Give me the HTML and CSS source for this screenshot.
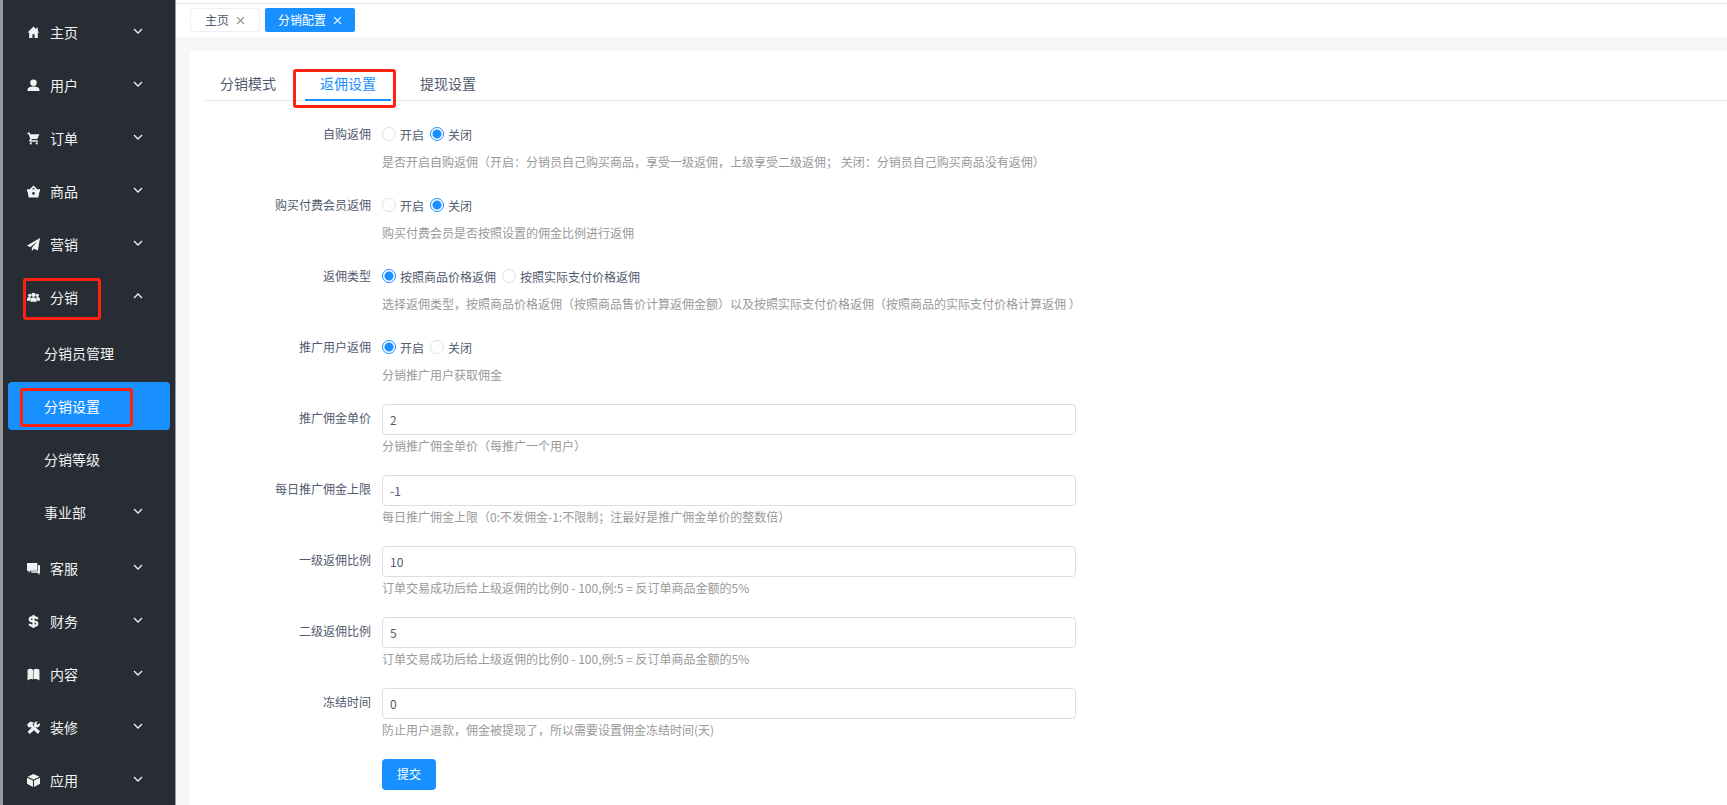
FILE: index.html
```html
<!DOCTYPE html>
<html lang="zh-CN">
<head>
  <meta charset="UTF-8">
  <meta name="viewport" content="width=device-width, initial-scale=1.0">
  <title>分销配置</title>
  <link rel="stylesheet" href="styles.css">
</head>
<body>
  <svg class="sprite" aria-hidden="true">
    <symbol id="down" viewBox="0 0 10 10"><path d="M1 3l4 4 4-4" fill="none" stroke="currentColor" stroke-width="1.3"/></symbol>
    <symbol id="up" viewBox="0 0 10 10"><path d="M1 7l4-4 4 4" fill="none" stroke="currentColor" stroke-width="1.3"/></symbol>
    <symbol id="close" viewBox="0 0 8 8"><path d="M1 1l6 6M7 1l-6 6" fill="none" stroke="currentColor"/></symbol>
  </svg>

  <aside class="sidebar">
    <ul class="menu">
      <li><a href="#" class="menu-item">
        <svg class="icon" viewBox="0 0 24 24"><path d="M12 1L1 12h3v10h6v-7h4v7h6V12h3L20 9V3h-3v3z"/></svg>
        <span>主页</span><svg class="arrow"><use href="#down"/></svg></a></li>
      <li><a href="#" class="menu-item">
        <svg class="icon" viewBox="0 0 24 24"><circle cx="12" cy="7" r="6"/><path d="M1 22v-2c0-4 5-6 11-6s11 2 11 6v2z"/></svg>
        <span>用户</span><svg class="arrow"><use href="#down"/></svg></a></li>
      <li><a href="#" class="menu-item">
        <svg class="icon" viewBox="0 0 24 24"><path d="M1 1h4l1 3h17l-4 9H9l-1 2h12v3H5l-1-2 2-4L3 4H1z"/><circle cx="7" cy="21" r="2"/><circle cx="18" cy="21" r="2"/></svg>
        <span>订单</span><svg class="arrow"><use href="#down"/></svg></a></li>
      <li><a href="#" class="menu-item">
        <svg class="icon" viewBox="0 0 24 24"><path fill-rule="evenodd" d="M0 8h5l7-7 7 7h5v4h-1l-2 11H3L1 12H0zM9 8h6l-3-3zM12 13a2 2 0 1 0 0 5 2 2 0 0 0 0-5z"/></svg>
        <span>商品</span><svg class="arrow"><use href="#down"/></svg></a></li>
      <li><a href="#" class="menu-item">
        <svg class="icon" viewBox="0 0 24 24"><path d="M24 0L0 14l6 3L19 6 9 18v6l4-4 7 3z"/></svg>
        <span>营销</span><svg class="arrow"><use href="#down"/></svg></a></li>
      <li><a href="#" class="menu-item">
        <svg class="icon" viewBox="0 0 24 24"><circle cx="5" cy="8" r="3"/><circle cx="19" cy="8" r="3"/><circle cx="12" cy="7" r="4"/><path d="M0 18v-3c0-3 3-4 5-4l2 1-2 6zM24 18v-3c0-3-3-4-5-4l-2 1 2 6zM6 20v-4c0-3 3-4 6-4s6 1 6 4v4z"/></svg>
        <span>分销</span><svg class="arrow"><use href="#up"/></svg>
        <i class="mark mark-menu"></i></a>
        <ul class="submenu">
          <li><a href="#" class="menu-item">分销员管理</a></li>
          <li><a href="#" class="menu-item active">分销设置<i class="mark mark-submenu"></i></a></li>
          <li><a href="#" class="menu-item">分销等级</a></li>
          <li><a href="#" class="menu-item"><span>事业部</span><svg class="arrow"><use href="#down"/></svg></a></li>
        </ul>
      </li>
      <li><a href="#" class="menu-item">
        <svg class="icon" viewBox="0 0 24 24"><path d="M0 2h19v14H7l-4 4v-4H0z"/><path d="M20 6h4v14h-1v4l-4-4H8v-3h12z"/></svg>
        <span>客服</span><svg class="arrow"><use href="#down"/></svg></a></li>
      <li><a href="#" class="menu-item">
        <svg class="icon" viewBox="0 0 24 24"><path d="M19 8c0-3-3-4-7-4s-7 1-7 4 3 4 7 4 7 1 7 4-3 4-7 4-7-1-7-4M12 0v24" fill="none" stroke="currentColor" stroke-width="4"/></svg>
        <span>财务</span><svg class="arrow"><use href="#down"/></svg></a></li>
      <li><a href="#" class="menu-item">
        <svg class="icon" viewBox="0 0 24 24"><path d="M1 3c3-2 7-2 10 0v18c-3-1-5-1-10 2zM12 3c3-2 8-2 11 0v20c-5-3-8-3-11-2z"/></svg>
        <span>内容</span><svg class="arrow"><use href="#down"/></svg></a></li>
      <li><a href="#" class="menu-item">
        <svg class="icon" viewBox="0 0 24 24"><path d="M0 7l6-6 7 2-3 4 14 12-4 5L7 11l-4 1z"/><path d="M1 20l9-9 5 4-10 9zM13 9c-1-5 2-9 7-8l-3 4 2 2 5-3c1 5-3 9-8 8z"/></svg>
        <span>装修</span><svg class="arrow"><use href="#down"/></svg></a></li>
      <li><a href="#" class="menu-item">
        <svg class="icon" viewBox="0 0 24 24"><path d="M12 0l11 5-11 5L1 5zM0 7l11 5v12L0 18zM24 7l-11 5v12l11-6z"/></svg>
        <span>应用</span><svg class="arrow"><use href="#down"/></svg></a></li>
    </ul>
  </aside>

  <main class="main">
    <div class="tags">
      <a href="#" class="tag">主页<svg class="close"><use href="#close"/></svg></a>
      <a href="#" class="tag tag-active">分销配置<svg class="close"><use href="#close"/></svg></a>
    </div>

    <div class="card">
      <nav class="tabs">
        <a href="#" class="tab">分销模式</a>
        <a href="#" class="tab tab-active">返佣设置<i class="mark mark-tab"></i></a>
        <a href="#" class="tab">提现设置</a>
      </nav>

      <form class="form">
        <div class="row" role="radiogroup" aria-labelledby="self-label">
          <span class="label" id="self-label">自购返佣</span>
          <div>
            <div class="radios">
              <label><input type="radio" name="self">开启</label>
              <label><input type="radio" name="self" checked>关闭</label>
            </div>
            <p class="hint">是否开启自购返佣（开启：分销员自己购买商品，享受一级返佣，上级享受二级返佣； 关闭：分销员自己购买商品没有返佣）</p>
          </div>
        </div>
        <div class="row" role="radiogroup" aria-labelledby="member-label">
          <span class="label" id="member-label">购买付费会员返佣</span>
          <div>
            <div class="radios">
              <label><input type="radio" name="member">开启</label>
              <label><input type="radio" name="member" checked>关闭</label>
            </div>
            <p class="hint">购买付费会员是否按照设置的佣金比例进行返佣</p>
          </div>
        </div>
        <div class="row" role="radiogroup" aria-labelledby="type-label">
          <span class="label" id="type-label">返佣类型</span>
          <div>
            <div class="radios">
              <label><input type="radio" name="type" checked>按照商品价格返佣</label>
              <label><input type="radio" name="type">按照实际支付价格返佣</label>
            </div>
            <p class="hint">选择返佣类型，按照商品价格返佣（按照商品售价计算返佣金额）以及按照实际支付价格返佣（按照商品的实际支付价格计算返佣 ）</p>
          </div>
        </div>
        <div class="row" role="radiogroup" aria-labelledby="promo-label">
          <span class="label" id="promo-label">推广用户返佣</span>
          <div>
            <div class="radios">
              <label><input type="radio" name="promo" checked>开启</label>
              <label><input type="radio" name="promo">关闭</label>
            </div>
            <p class="hint">分销推广用户获取佣金</p>
          </div>
        </div>
        <div class="row">
          <label class="label" for="price">推广佣金单价</label>
          <div>
            <input type="text" class="input" id="price" value="2">
            <p class="hint">分销推广佣金单价（每推广一个用户）</p>
          </div>
        </div>
        <div class="row">
          <label class="label" for="limit">每日推广佣金上限</label>
          <div>
            <input type="text" class="input" id="limit" value="-1">
            <p class="hint">每日推广佣金上限（0:不发佣金-1:不限制；注最好是推广佣金单价的整数倍）</p>
          </div>
        </div>
        <div class="row">
          <label class="label" for="level1">一级返佣比例</label>
          <div>
            <input type="text" class="input" id="level1" value="10">
            <p class="hint">订单交易成功后给上级返佣的比例0 - 100,例:5 = 反订单商品金额的5%</p>
          </div>
        </div>
        <div class="row">
          <label class="label" for="level2">二级返佣比例</label>
          <div>
            <input type="text" class="input" id="level2" value="5">
            <p class="hint">订单交易成功后给上级返佣的比例0 - 100,例:5 = 反订单商品金额的5%</p>
          </div>
        </div>
        <div class="row">
          <label class="label" for="freeze">冻结时间</label>
          <div>
            <input type="text" class="input" id="freeze" value="0">
            <p class="hint">防止用户退款，佣金被提现了，所以需要设置佣金冻结时间(天)</p>
          </div>
        </div>
        <div class="row">
          <span></span>
          <div><button type="submit" class="submit">提交</button></div>
        </div>
      </form>
    </div>
  </main>
</body>
</html>
```
FILE: styles.css
```css
* {
  box-sizing: border-box;
}
body {
  display: flex;
  height: 100vh;
  margin: 0;
  overflow: hidden;
  border-left: 3px solid #999;
  background: #f7f7f7;
  color: #515a6e;
  font-family: "Noto Sans CJK SC", sans-serif;
  font-size: 12px;
}
a {
  color: inherit;
  text-decoration: none;
}
ul {
  margin: 0;
  padding: 0;
  list-style: none;
}
.sprite {
  display: none;
}

/* sidebar */
.sidebar {
  flex: none;
  width: 173px;
  padding: 8px 5px 0;
  overflow-y: auto;
  scrollbar-width: none;
  background: #282c34;
  border-right: 1px solid #999b9f;
  color: #f2f2f3;
  font-size: 14px;
}
.menu-item {
  position: relative;
  display: flex;
  align-items: center;
  height: 48px;
  margin-bottom: 5px;
  padding: 0 27px 0 19px;
  border-radius: 4px;
}
.icon {
  width: 13px;
  height: 13px;
  margin-right: 10px;
  fill: currentColor;
}
.arrow {
  width: 10px;
  height: 10px;
  margin-left: auto;
  margin-bottom: 3px;
}
.submenu {
  padding: 3px 0;
}
.submenu .menu-item {
  padding-left: 36px;
}
.menu-item.active {
  background: #1890ff;
  color: #fff;
}

/* red highlight frames */
.mark {
  position: absolute;
  border: 3px solid #ff2010;
  border-radius: 3px;
  pointer-events: none;
}
.mark-menu {
  top: 5px;
  left: 15px;
  width: 78px;
  height: 42px;
}
.mark-submenu {
  top: 6px;
  left: 12px;
  width: 113px;
  height: 39px;
}
.mark-tab {
  top: 2px;
  left: -12px;
  width: 103px;
  height: 39px;
}

/* page */
.main {
  display: flex;
  flex: 1;
  flex-direction: column;
  min-width: 0;
  border-top: 3px solid #fff;
}
.tags {
  display: flex;
  gap: 5px;
  padding: 4px 14px 5px;
  background: #fff;
  border-top: 1px solid #e8e8ea;
}
.tag {
  display: flex;
  align-items: center;
  gap: 7px;
  height: 24px;
  padding: 0 14px;
  border: 1px solid #eeeef8;
  border-radius: 2px;
  line-height: 20px;
}
.tag-active {
  padding: 0 12px;
  background: #1890ff;
  border-color: #1890ff;
  color: #fff;
}
.close {
  width: 9px;
  height: 9px;
  color: #888;
}
.tag-active .close {
  color: #fff;
}
.card {
  flex: 1;
  margin: 14px 0 0 14px;
  padding: 16px 0 0 15px;
  border-top-left-radius: 4px;
  background: #fff;
}
.tabs {
  display: flex;
  gap: 14px;
  border-bottom: 1px solid #dfe2e8;
  font-size: 14px;
}
.tab {
  position: relative;
  height: 34px;
  margin-bottom: -1px;
  padding: 0 15px;
  border-bottom: 2px solid transparent;
  line-height: 32px;
}
.tab-active {
  border-bottom-color: #1890ff;
  color: #1890ff;
}

/* form */
.form {
  padding-top: 19px;
}
.row {
  display: grid;
  grid-template-columns: 166px minmax(0, 694px);
  column-gap: 11px;
  margin-bottom: 19px;
}
.label {
  line-height: 27px;
  text-align: right;
}
.radios {
  display: flex;
  gap: 6px;
  height: 29px;
  margin-bottom: 2px;
}
.radios label {
  display: flex;
  align-items: center;
  gap: 4px;
  height: 28px;
}
.radios input {
  appearance: none;
  width: 14px;
  height: 14px;
  margin: 0;
  border: 1px solid #dcdee2;
  border-radius: 50%;
  background: #fff;
}
.radios input:checked {
  border-color: #1890ff;
  background: radial-gradient(circle, #1890ff 4px, #fff 5px);
}
.input {
  display: block;
  width: 100%;
  height: 31px;
  padding: 0 7px 1px;
  border: 1px solid #dcdee2;
  border-radius: 4px;
  color: #515a6e;
  font: inherit;
}
.hint {
  margin: 0;
  color: #999;
  line-height: 21px;
  white-space: nowrap;
}
.submit {
  width: 54px;
  height: 31px;
  padding: 0 0 3px;
  border: 0;
  border-radius: 4px;
  background: #1890ff;
  color: #fff;
  font: inherit;
}
```
